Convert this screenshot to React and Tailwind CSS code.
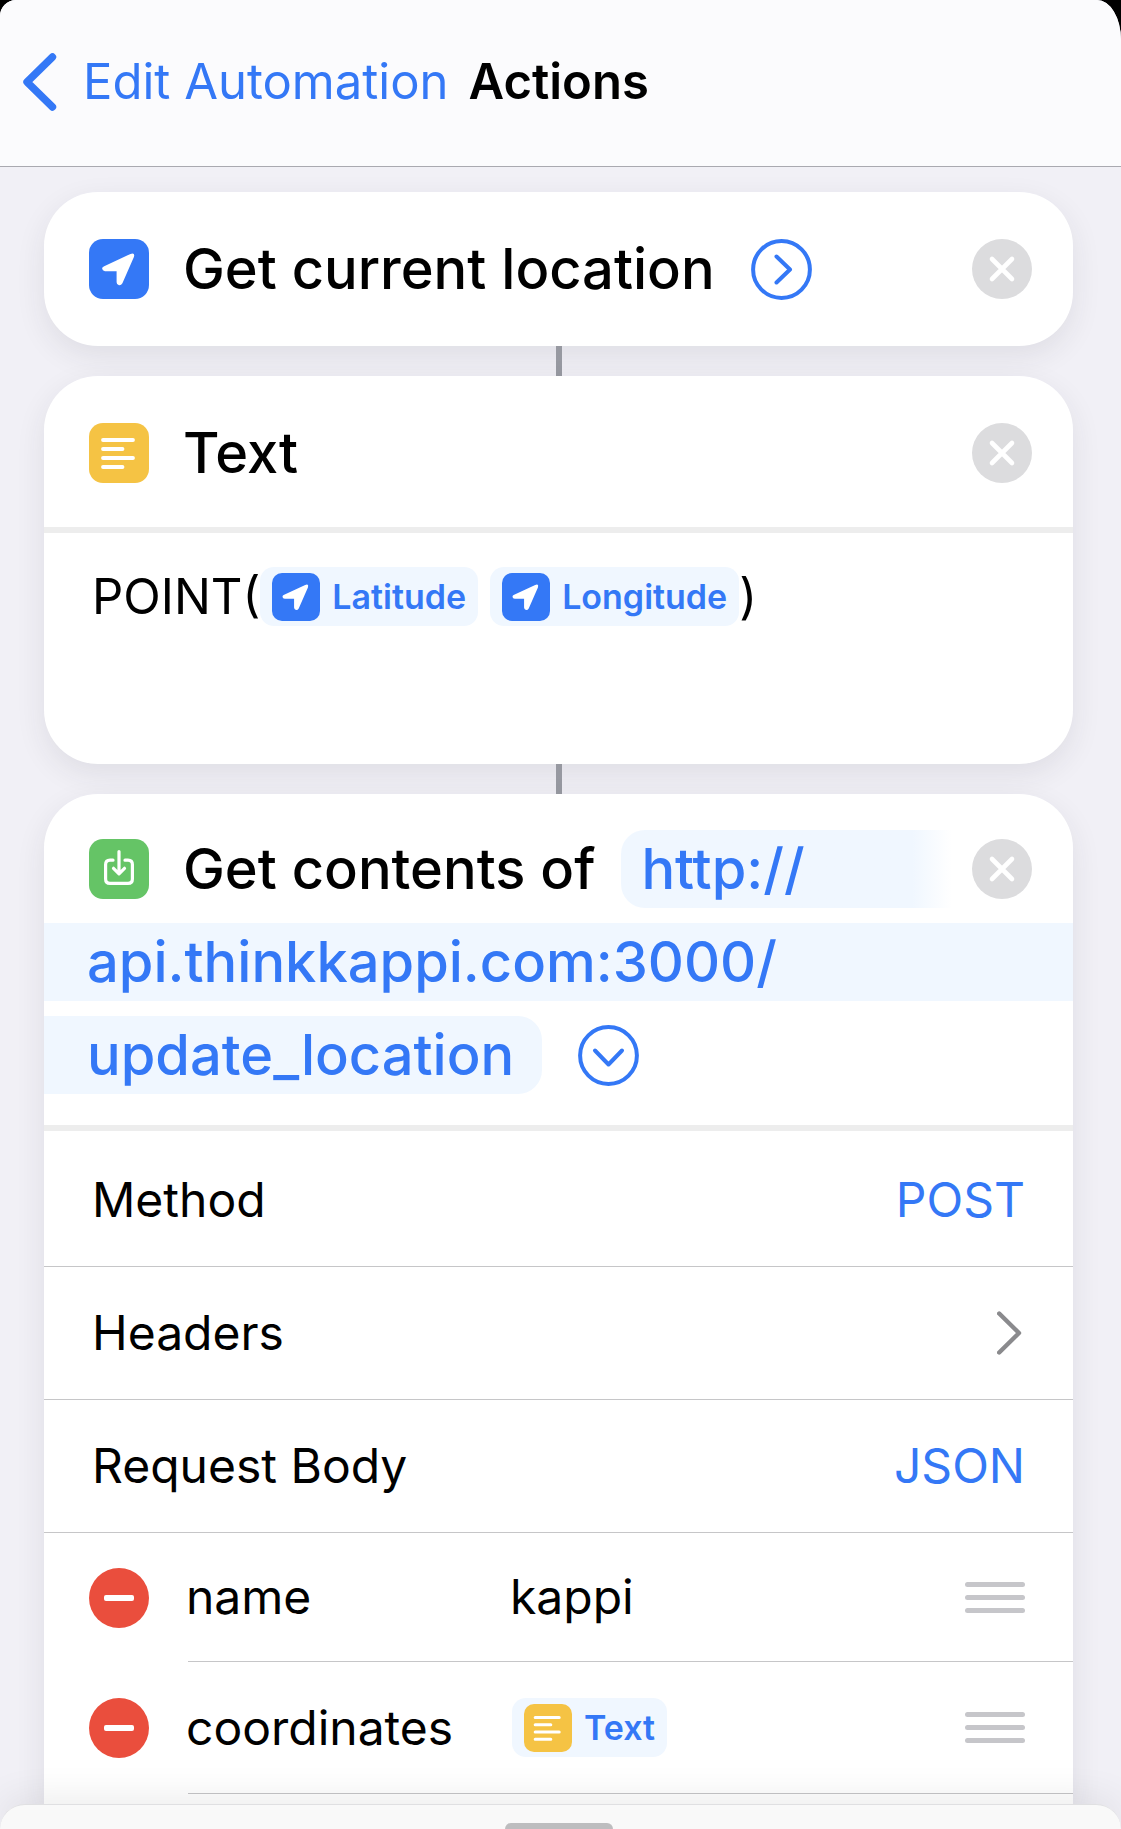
import React from "react";

function LocationGlyph({ className }) {
  return (
    <svg viewBox="0 0 60 60" className={className} aria-hidden="true">
      <path
        d="M15.2 27.2 L41.5 14.9 Q46.3 13.2 44.9 18 L33.4 44.3 Q32.2 46.4 30 46.2 Q27.6 45.7 27.6 43.2 V32.2 H16 Q13.3 31.9 13.1 29.6 Q13.1 28.1 15.2 27.2 Z"
        fill="white"
      />
    </svg>
  );
}

function TextGlyph({ className }) {
  return (
    <svg viewBox="0 0 60 60" className={className} aria-hidden="true">
      <path d="M14 17H44M14 26H33.5M14 35H44M14 44H33.5" stroke="white" strokeWidth="3.8" strokeLinecap="round" />
    </svg>
  );
}

function DownloadGlyph({ className }) {
  return (
    <svg viewBox="0 0 60 60" className={className} aria-hidden="true">
      <g fill="none" stroke="white" strokeWidth="3.2" strokeLinecap="round" strokeLinejoin="round">
        <path d="M24 21.2H21Q16.6 21.2 16.6 25.6V40Q16.6 44.4 21 44.4H39Q43.4 44.4 43.4 40V25.6Q43.4 21.2 39 21.2H36" />
        <path d="M30 12.5V34M24.5 29.3L30 34.8L35.5 29.3" />
      </g>
    </svg>
  );
}

function Tile({ color, children }) {
  return <span className={`size-[60px] shrink-0 rounded-[14px] ${color}`}>{children}</span>;
}

function RemoveAction({ name }) {
  return (
    <button aria-label={`Remove ${name}`} className="ml-auto size-[60px] shrink-0 rounded-full bg-[#dcdcde]">
      <svg viewBox="0 0 60 60" aria-hidden="true">
        <path d="M20 20L40 40M40 20L20 40" stroke="white" strokeWidth="4.6" strokeLinecap="round" />
      </svg>
    </button>
  );
}

function Disclosure({ label, down }) {
  return (
    <button aria-label={label} className="size-[61px] shrink-0 text-[#3478f6]">
      <svg viewBox="0 0 61 61" fill="none" stroke="currentColor" strokeWidth="4" strokeLinecap="round" strokeLinejoin="round" aria-hidden="true">
        <circle cx="30.5" cy="30.5" r="28.4" />
        <path d={down ? "M17 25.5L30.5 39.5L44 25.5" : "M25.5 17.5L39 30.5L25.5 43.5"} />
      </svg>
    </button>
  );
}

function Variable({ color, label, children }) {
  return (
    <button className="flex h-[59px] items-center gap-3 rounded-[14px] bg-[#f0f7ff] px-3 text-[34px] leading-none font-semibold text-[#3478f6]">
      <span className={`size-12 rounded-[10px] ${color}`}>{children}</span>
      {label}
    </button>
  );
}

function Connector() {
  return <div className="mx-auto h-[30px] w-1.5 bg-[#9799a1]" />;
}

const CARD_SHADOW = "shadow-[0_10px_30px_rgba(40,40,60,0.09)]";

function Row({ label, height = "h-[133px]", children }) {
  return (
    <div className={`flex items-center justify-between border-b border-[#c6c6c8] px-12 text-[48px] ${height}`}>
      <span>{label}</span>
      {children}
    </div>
  );
}

function Field({ name, height, children }) {
  return (
    <div className={`flex items-stretch pl-[45px] text-[48px] ${height}`}>
      <button aria-label={`Delete ${name}`} className="mr-9 flex size-[60px] shrink-0 items-center justify-center self-center rounded-full bg-[#ea4e3d]">
        <span className="h-1.5 w-[30px] rounded-[2px] bg-white" />
      </button>
      <div className="ml-[3px] flex min-w-0 flex-1 items-center border-b border-[#c6c6c8] pr-12">
        <input aria-label="Key" defaultValue={name} className="-ml-0.5 w-[326px] shrink-0 outline-none" />
        <div className="flex min-w-0 flex-1">{children}</div>
        <button aria-label={`Reorder ${name}`} className="flex w-[60px] shrink-0 flex-col gap-2">
          <span className="h-[5px] rounded-full bg-[#c6c6ca]" />
          <span className="h-[5px] rounded-full bg-[#c6c6ca]" />
          <span className="h-[5px] rounded-full bg-[#c6c6ca]" />
        </button>
      </div>
    </div>
  );
}

export default function App() {
  return (
    <div className="bg-black font-['Inter',sans-serif]">
      <div className="flex min-h-screen flex-col overflow-hidden rounded-tl-[16px] rounded-tr-[24px_40px] bg-[#f1f0f6] text-[49px] leading-[60px] text-black">
        <header className="flex h-[167px] items-center border-b border-[#a9a9b0] bg-[#fbfbfd] pb-0.5 pl-[23px]">
          <a href="#automation" className="flex items-center gap-[26px] text-[#3478f6]">
            <svg viewBox="0 0 34 58" className="h-[58px] w-[34px]" fill="none" stroke="currentColor" strokeWidth="7.4" strokeLinecap="round" strokeLinejoin="round" aria-hidden="true">
              <path d="M29.5 4L4 29L29.5 54" />
            </svg>
            Edit Automation
          </a>
          <h1 className="ml-5 font-semibold">Actions</h1>
        </header>

        <main className="flex flex-1 flex-col pt-[25px] pr-12 pl-11">
          <section className={`flex h-[154px] items-center rounded-[54px] bg-white pr-[41px] pl-[45px] ${CARD_SHADOW}`}>
            <Tile color="bg-[#3478f6]"><LocationGlyph /></Tile>
            <h2 className="mr-9 ml-[34px] text-[56px] font-medium">Get current location</h2>
            <Disclosure label="Show options" />
            <RemoveAction name="Get current location" />
          </section>
          <Connector />

          <section className={`rounded-[54px] bg-white ${CARD_SHADOW}`}>
            <div className="flex items-center border-b-6 border-[#ededed] pt-[47px] pr-[41px] pb-11 pl-[45px]">
              <Tile color="bg-[#f5c344]"><TextGlyph /></Tile>
              <h2 className="ml-[34px] text-[56px] font-medium">Text</h2>
              <RemoveAction name="Text" />
            </div>
            <div className="flex h-[231px] items-center px-12 pt-[34px] pb-[138px]">
              <span>POINT(</span>
              <Variable color="bg-[#3478f6]" label="Latitude"><LocationGlyph /></Variable>
              <span className="w-3" />
              <Variable color="bg-[#3478f6]" label="Longitude"><LocationGlyph /></Variable>
              <span>)</span>
            </div>
          </section>
          <Connector />

          <section className={`flex-1 rounded-t-[54px] bg-white ${CARD_SHADOW}`}>
            <div className="border-b-6 border-[#ededed] pt-9 pb-[31px] text-[56px] font-medium">
              <div className="flex h-[78px] items-center pr-[41px] pl-[45px]">
                <Tile color="bg-[#65c466]"><DownloadGlyph /></Tile>
                <h2 className="ml-[34px]">Get contents of</h2>
                <a href="#url" className="mr-5 ml-[26px] flex-1 rounded-l-[24px] bg-linear-to-r from-[#f0f7ff] from-88% to-white py-[9px] pl-5 text-[#3478f6]">http://</a>
                <RemoveAction name="Get contents of URL" />
              </div>
              <a href="#url" className="mt-[15px] block bg-[#f0f7ff] py-[9px] pl-[43px] text-[#3478f6]">api.thinkkappi.com:3000/</a>
              <div className="mt-[15px] flex items-center gap-9">
                <a href="#url" className="rounded-r-[24px] bg-[#f0f7ff] py-[9px] pr-7 pl-[43px] text-[#3478f6]">update_location</a>
                <Disclosure label="Hide options" down />
              </div>
            </div>
            <Row label="Method" height="h-[136px] pt-0.5"><button className="text-[#3478f6]">POST</button></Row>
            <Row label="Headers">
              <button aria-label="Open headers">
                <svg viewBox="0 0 28 44" className="h-11 w-7" fill="none" stroke="#8a8a8d" strokeWidth="4.4" strokeLinecap="round" strokeLinejoin="round" aria-hidden="true">
                  <path d="M2.2 2.5L22 22L2.2 41.5" />
                </svg>
              </button>
            </Row>
            <Row label="Request Body"><button className="text-[#3478f6]">JSON</button></Row>
            <Field name="name" height="h-[129px]">
              <input aria-label="Value of name" defaultValue="kappi" className="-ml-0.5 w-full outline-none" />
            </Field>
            <Field name="coordinates" height="h-[132px]">
              <Variable color="bg-[#f5c344]" label="Text"><TextGlyph /></Variable>
            </Field>
            <div className="h-2.5" />
          </section>
        </main>

        <footer className="relative flex h-[25px] justify-center rounded-t-[32px] border-t border-[#e0e0e2] bg-[#f9f9f9] pt-[18px] pr-1 shadow-[0_0_40px_rgba(0,0,0,0.12)]">
          <button aria-label="Expand action list" className="h-[6px] w-[108px] rounded-t-[6px] bg-[#bdbdbf]" />
        </footer>
      </div>
    </div>
  );
}
